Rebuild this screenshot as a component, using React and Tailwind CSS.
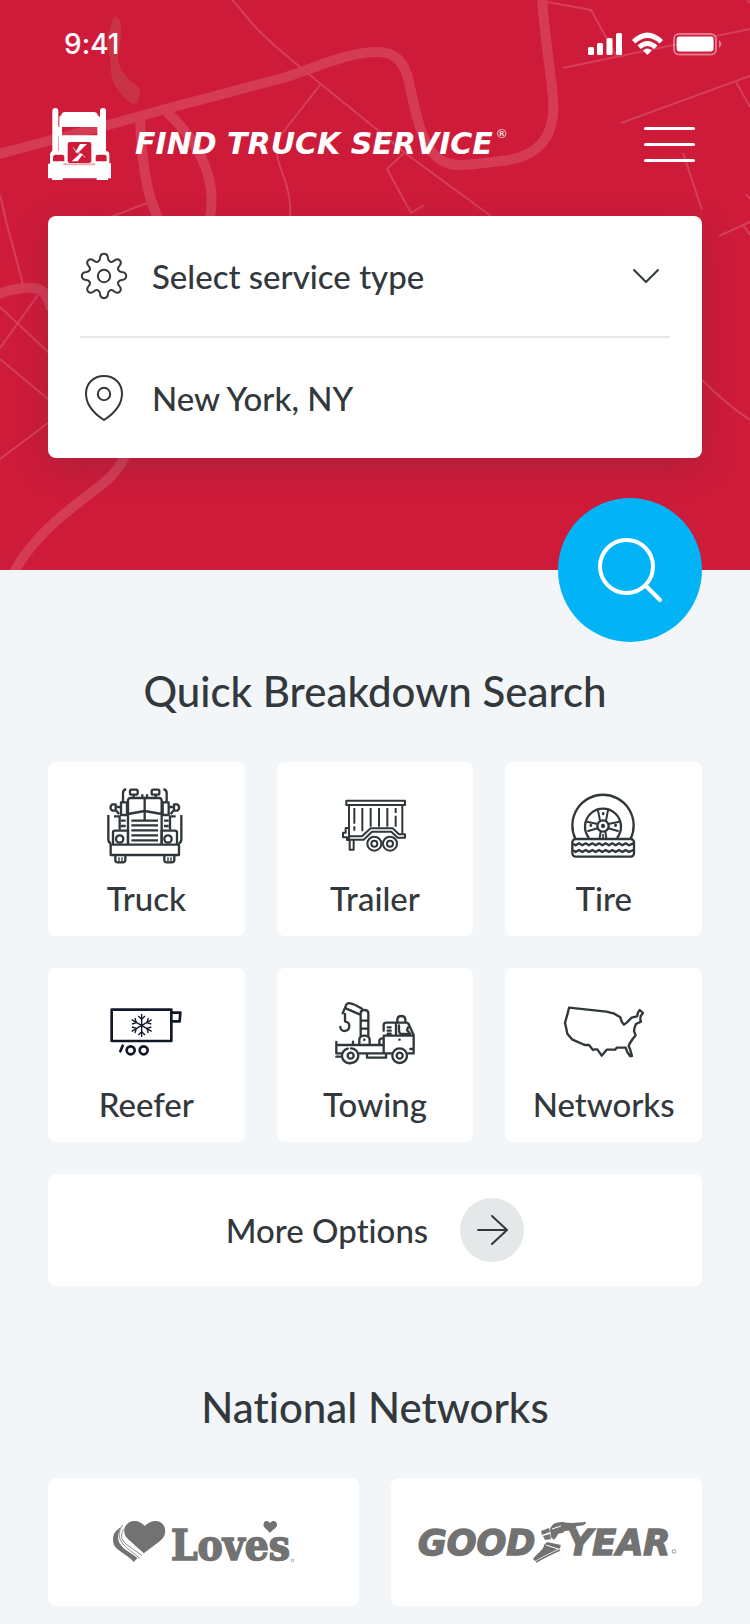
import React from 'react';

function MapBackground() {
  return (
    <svg
      className="absolute inset-0 h-full w-full"
      viewBox="0 0 750 570"
      preserveAspectRatio="xMidYMid slice"
      fill="none"
      aria-hidden="true"
    >
      <path
        d="M114 16C119 17 121 21 121 28C122 38 118 50 118 58C119 72 131 82 139 87C141 92 138 104 134 104C128 104 113 86 112 78C110 68 112 62 107 46C106 36 111 26 114 16Z"
        fill="#c83446"
      />
      <g stroke="#d53b55" strokeWidth="10">
        <path d="M-5 155C60 138 105 126 162 110L283 78C310 70 345 52 378 52C395 52 405 62 409 82C413 100 415 115 422 133C431 155 440 165 460 165C475 165 490 162 502 161C540 157 556 135 553 97C549 60 544 30 542 -2" />
        <path d="M140 115C141 150 144 192 160 222C172 242 202 245 210 217C217 180 200 143 167 112" />
        <path d="M-4 295C14 287 32 287 38 289C46 291 49 300 51 310" />
        <path d="M127 450C121 470 106 482 92 492C62 515 32 538 13 574" />
      </g>
      <g stroke="#d63f58" strokeWidth="2">
        <path d="M232 0C240 8 244 14 250 21C262 35 278 49 300 67L375 128L405 153L495 219" />
        <path d="M320 85L284 131C276 141 276 148 278 160C282 176 292 190 290 218" />
        <path d="M108 218L147 203M0 195L6 220M3 210L23 284M0 307L49 353M38 295L0 348M0 359L48 399M48 423L0 459" />
        <path d="M547 2L591 10L617 57M563 68L750 29M621 123L750 76M736 82L750 107M683 153L702 210" />
        <path d="M404 153L387 169L411 213L424 205M746 194L750 199M747 0L750 3M719 236L750 222M743 225L750 235M702 380Q725 403 750 420" />
      </g>
    </svg>
  );
}

function StatusBar() {
  return (
    <div className="flex h-[88px] items-center justify-between pr-7 pl-16">
      <span className="font-['Inter','Liberation_Sans',sans-serif] text-[28px] leading-8 font-medium">9:41</span>
      <svg width="134" height="24" viewBox="588 32 134 24" fill="#fff" aria-hidden="true">
        <rect x="588" y="47" width="6" height="8" rx="1.500" />
        <rect x="597" y="43" width="6" height="12" rx="1.500" />
        <rect x="606.500" y="38" width="6" height="17" rx="1.500" />
        <rect x="616" y="33" width="6" height="22" rx="1.500" />
        <path d="M632 40Q647.300 25 663 40L659.600 43.500Q647.300 32.500 635.400 43.500Z" />
        <path d="M637.500 45.500Q647.300 36.500 657.500 45.500L654 49Q647.300 43 640.900 49Z" />
        <path d="M643 50.500Q647.300 46.500 651.800 50.500L647.400 55Z" />
        <rect x="674" y="34" width="42" height="20.500" rx="5" fill="none" stroke="#fff" strokeOpacity=".4" strokeWidth="2" />
        <rect x="676.600" y="36.600" width="37" height="15" rx="3" />
        <path d="M719 40Q724 44 719 48Z" fillOpacity=".4" />
      </svg>
    </div>
  );
}

function BrandTruck() {
  return (
    <svg width="63" height="72" viewBox="144 324 189 216" fill="#fff" aria-hidden="true">
      <path d="M157 333Q157 324 166 324Q175 324 175 333V455H157ZM300 333Q300 324 309 324Q318 324 318 333V455H300Z" />
      <path d="M178 381V353Q179 347 184 346Q185 336 196 336H280Q292 336 293 346Q300 348 300 355V381Z" />
      <path d="M174 380H186V406H292V380H302V409H174Z" />
      <path
        fillRule="evenodd"
        d="M176 408H300V452H317Q328 453 328 464V490H333V535H324V540H290V535H188V540H156V535H144V491H150V464Q151 453 160 452H176ZM210 426Q203 426 203 433V482Q203 489 210 489H267Q274 489 274 482V433Q274 426 267 426ZM166 464Q159 465 159 472V484H193V470Q192 464 187 464ZM292 464Q287 465 287 470V484H320V471Q320 464 313 464Z"
      />
      <path d="M190 490H286V496H190Z" fill="#f3a6b4" />
      <path d="M240 432H261L236 457H226ZM233 484H215L239 462H249Z" />
      <path d="M228 457L246 462M219 442L230 457M246 462L255 473" stroke="#fff" strokeWidth="2" fill="none" />
    </svg>
  );
}

function GearIcon() {
  return (
    <svg className="shrink-0" width="48" height="48" viewBox="240 126 144 144" fill="none" stroke="#32383b" strokeWidth="6" strokeLinejoin="round" aria-hidden="true">
      <circle cx="312" cy="198" r="18.500" />
      <path d="M300 145C301 127 323 127 324 145C325 155 333 159 341 153C355 140 370 155 357 169C351 177 355 185 365 186C383 187 383 209 365 210C355 211 351 219 357 227C370 241 355 256 341 243C333 237 325 241 324 251C323 269 301 269 300 251C299 241 291 237 283 243C269 256 254 241 267 227C273 219 269 211 259 210C241 209 241 187 259 186C269 185 273 177 267 169C254 155 269 140 283 153C291 159 299 155 300 145Z" />
    </svg>
  );
}

function PinIcon() {
  return (
    <svg className="shrink-0" width="48" height="48" viewBox="240 492 144 144" fill="none" stroke="#32383b" strokeWidth="6" strokeLinejoin="round" aria-hidden="true">
      <circle cx="312" cy="552" r="18.500" />
      <path d="M312 630C283 611 258 583 258 551C258 520 280 498 312 498C344 498 366 520 366 551C366 583 341 611 312 630Z" />
    </svg>
  );
}

function TruckIcon() {
  return (
    <svg width="112" height="112" viewBox="-29 -39 336 336" fill="none" stroke="#30373a" strokeWidth="7" strokeLinejoin="round" aria-hidden="true">
      <path d="M85 207V76Q86 69 93 69H178Q185 69 186 76V207M85 117L135 108L186 117M135 69V136M128 58V69M142 58V69" />
      <rect x="91" y="44" width="23" height="15" rx="4" />
      <rect x="156" y="44" width="23" height="15" rx="4" />
      <path d="M102 59V69M168 59V69M80 43Q70 43 70 54V82M191 43Q201 43 201 54V82" />
      <path d="M64 82H82V120H64ZM189 82H207V120H189ZM62 96H50M209 96H222M58 117L50 107M213 117L221 107" />
      <path d="M38 88H48V107H38L33 101V94ZM233 88H223V107H233L238 101V94Z" />
      <path d="M26 120V193Q26 203 34 206M245 120V193Q245 203 237 206M43 124H60V164M228 124H211V164" />
      <path d="M64 137H78M64 153H78M193 137H207M193 153H207M95 137H175M95 151H175M95 166H175M95 181H175M95 196H175" />
      <path d="M40 207V172Q40 167 46 167H85V207M232 207V172Q232 167 225 167H186V207" />
      <circle cx="60" cy="192" r="11" />
      <circle cx="205" cy="192" r="11" />
      <path d="M33 209H238V240H33ZM47 241V256Q48 262 54 262H70Q76 262 77 256V241M194 241V256Q195 262 201 262H217Q223 262 224 256V241" />
      <path d="M58 247V260M67 247V260M205 247V260M214 247V260" strokeWidth="4" />
    </svg>
  );
}

function TrailerIcon() {
  return (
    <svg width="112" height="112" viewBox="-33 -69 336 336" fill="none" stroke="#30373a" strokeWidth="6" strokeLinejoin="round" aria-hidden="true">
      <rect x="49" y="47" width="176" height="13" />
      <path d="M57 60V154M217 60V146M73 69V116M73 124V137M97 69V139M122 69V125M147 69V125M172 69V125M197 69V84M197 92V125" />
      <path d="M57 154H96L122 130H188L207 148H225V158H203L184 140H126L101 164H57ZM57 129H47V143H39V157H51V165H57M59 166V194H71V166" />
      <circle cx="133" cy="176" r="21" />
      <circle cx="133" cy="176" r="9" />
      <circle cx="180" cy="176" r="21" />
      <circle cx="180" cy="176" r="9" />
    </svg>
  );
}

function TireIcon() {
  return (
    <svg width="112" height="112" viewBox="-37 -54 336 336" fill="none" stroke="#30373a" strokeWidth="7" strokeLinejoin="round" aria-hidden="true">
      <path d="M45 176A92 92 0 1 1 211 176M86 174A54 54 0 1 1 170 174" />
      <circle cx="128" cy="138" r="17" />
      <circle cx="128" cy="138" r="3" fill="#30373a" />
      <path d="M119 122L112 86M137 122L144 86M112 132L79 125M112 145L81 154M144 132L177 125M144 145L175 154M121 155L118 174M135 155L138 174" strokeWidth="6" />
      <path d="M126 98H131V104H126ZM89 133H94V139H89ZM163 133H168V139H163Z" fill="#30373a" strokeWidth="3" />
      <path d="M128 162V174" strokeWidth="5" />
      <rect x="36" y="177" width="185" height="53" rx="10" />
      <path d="M38 191L46 196L56 190L66 196L76 190L86 196L96 190L106 196L116 190L126 196L136 190L146 196L156 190L166 196L176 190L186 196L196 190L206 196L219 190M38 211L46 216L56 210L66 216L76 210L86 216L96 210L106 216L116 210L126 216L136 210L146 216L156 210L166 216L176 210L186 216L196 210L206 216L219 210" />
    </svg>
  );
}

function ReeferIcon() {
  return (
    <svg width="112" height="112" viewBox="-29 -81 336 336" fill="none" stroke="#101828" strokeWidth="8" strokeLinejoin="round" aria-hidden="true">
      <path d="M36 44H215V138H36ZM215 53H242L240 79H215" />
      <circle cx="93" cy="166" r="12" />
      <circle cx="132" cy="166" r="12" />
      <path d="M69 152L62 169" strokeLinecap="round" />
      <g strokeWidth="4">
        <path d="M126 57V126M96 74L156 109M156 74L96 109" />
        <path d="M116 63L126 73L136 63M116 120L126 110L136 120M97 87L110 83L106 69M155 87L142 83L146 69M97 96L110 100L106 114M155 96L142 100L146 114" />
      </g>
    </svg>
  );
}

function TowingIcon() {
  return (
    <svg width="112" height="112" viewBox="-18 -66 336 336" fill="none" stroke="#30373a" strokeWidth="7" strokeLinecap="round" strokeLinejoin="round" aria-hidden="true">
      <path d="M53 70L64 44Q68 38 76 40L86 43M92 46L111 56M64 56L104 73M60 72V92M60 94Q72 96 73 107C73 127 46 128 46 111" />
      <path d="M107 136V70Q107 60 118 60Q130 60 130 70V136M107 92H130M107 116H130M103 162V149Q104 137 118 137Q133 137 134 149V162M118 148V150" />
      <path d="M51 190H34V165H176M34 156V165M84 155V165M163 163V152Q164 145 174 145M34 200H46M102 190H199M126 194V203H183V194" />
      <path d="M176 188V140M176 122V104Q177 98 184 98H245Q251 99 253 107L266 135V190H249M176 137H266M213 100V132M188 112H197M188 122H197M188 131H197M223 149H224M256 177H266" />
      <path d="M217 96V87Q219 78 229 78Q239 78 241 87V96M222 106V119Q222 132 231 132H256L246 120L249 112" />
      <path d="M68 176A22 22 0 1 0 78 219M78 175A22 22 0 0 1 78 219" />
      <circle cx="77" cy="197" r="9" />
      <circle cx="224" cy="197" r="22" />
      <circle cx="224" cy="197" r="9" />
    </svg>
  );
}

function NetworksIcon() {
  return (
    <svg width="112" height="112" viewBox="-7 -81 336 336" fill="none" stroke="#30373a" strokeWidth="7" strokeLinejoin="round" aria-hidden="true">
      <path d="M56 38L105 43L168 50L192 56L210 67L215 82L221 89L230 82L244 68L260 64L263 53L268 45L278 54L271 63L270 74L272 80L257 87L253 97L251 108L256 121L247 132L239 144L235 153L240 165L245 183H239L231 171L226 158H199L195 164H169L154 182L141 163H134L128 165L116 150H103L65 133L51 116L48 101L44 83L51 59Z" />
    </svg>
  );
}

function LovesLogo() {
  return (
    <svg width="184" height="76" viewBox="0 -16 184 76" fill="#727272" role="img" aria-label="Love's">
      <path d="M32.700 6C36 2.500 40 1 43.500 1C49 1 53.200 5 53.200 11C53.200 16 51 18 48 21L31.800 33.300L17 20C14 17 12.200 15 12.200 11C12.200 5 17 1 22.500 1C27 1 30 3 32.700 6Z" />
      <path d="M9 7C3 11 1 14 1 20C1 26 5 29 8 31C13 35 18 37 21.600 42L25.500 38C18 32 12 30 8 24C5 19 6 12 9 7Z" />
      <path d="M11 5C6 11 6 18 11 24C15 29 22 33 27.500 38M12 9C8 14 9 20 14 24L30 35.500" fill="none" stroke="#727272" strokeWidth=".8" />
      <text x="59" y="40" fontSize="42" fontWeight="700" stroke="#727272" strokeWidth="1.500" className="font-['DejaVu_Serif_Condensed','DejaVu_Serif',serif]">Loves</text>
      <path d="M158 3C161 -.5 165 1 165 5C165 8 161 9 158 13C155 9 151.500 8 151.500 5C151.500 1 155 -.5 158 3Z" />
      <circle cx="180.500" cy="40.500" r="1.300" fill="none" stroke="#727272" strokeWidth=".6" />
    </svg>
  );
}

function GoodyearLogo() {
  return (
    <svg width="264" height="76" viewBox="0 -16 264 76" fill="#727272" role="img" aria-label="Goodyear">
      <g fontSize="35" fontWeight="900" fontStyle="italic" stroke="#727272" strokeWidth="1.500" className="font-['DejaVu_Sans',sans-serif]">
        <text x="3" y="35">GOOD</text>
        <text x="152" y="35">YEAR</text>
      </g>
      <path d="M136 7C138 3 143 2 148 2C157 4 163 2 171 2C171 5 167 6 161 6C163 8 159 9 155 9C156 11 152 11 149 11C150 13 146 13 143 14C142 17 140 18 139 20L136 17L135 9Z" />
      <path d="M126 11L134 8L135 12L127 15ZM128 16L135 14L136 19L130 20ZM132 22L146 25L145 28L127 37L120 41L118 39C121 34 129 30 129 25Z" />
      <path d="M137 9L146 6M131 25L143 29" stroke="#fff" strokeWidth="1" />
      <path d="M145 30C138 33 130 37 121 42" fill="none" stroke="#727272" strokeWidth="1.500" />
      <circle cx="259" cy="31.500" r="1.800" fill="none" stroke="#727272" strokeWidth=".7" />
    </svg>
  );
}

const services = [
  { label: 'Truck', Icon: TruckIcon },
  { label: 'Trailer', Icon: TrailerIcon },
  { label: 'Tire', Icon: TireIcon },
  { label: 'Reefer', Icon: ReeferIcon },
  { label: 'Towing', Icon: TowingIcon },
  { label: 'Networks', Icon: NetworksIcon },
];

export default function App() {
  return (
    <div className="min-h-screen bg-[#f2f6f9] font-['Lato','Liberation_Sans',sans-serif] font-medium text-[#32383b] [font-variant-ligatures:none]">
      <header className="relative bg-[#ce1b3a] pb-28 text-white">
        <MapBackground />
        <div className="relative">
          <StatusBar />
          <div className="mt-5 flex items-center justify-between px-12">
            <a href="#home" className="flex items-center gap-6">
              <BrandTruck />
              <span className="flex gap-1">
                <span className="font-['DejaVu_Sans','Liberation_Sans',sans-serif] text-[30px] leading-10 font-bold whitespace-nowrap italic">FIND TRUCK SERVICE</span>
                <span className="text-[12px] leading-5 font-normal">®</span>
              </span>
            </a>
            <button type="button" aria-label="Menu" className="flex w-[58px] flex-col gap-[13px] pr-[7px]">
              <span className="h-[3px] rounded-full bg-white" />
              <span className="h-[3px] rounded-full bg-white" />
              <span className="h-[3px] rounded-full bg-white" />
            </button>
          </div>
          <form className="mx-12 mt-9 rounded-lg bg-white px-8 text-[33px] text-[#32383b] shadow-[0_10px_32px_rgba(50,56,59,0.2)]">
            <label className="relative flex h-[120px] items-center gap-6">
              <GearIcon />
              <select aria-label="Service type" defaultValue="" className="min-w-0 flex-1 appearance-none bg-transparent leading-[48px] outline-none">
                <option value="">Select service type</option>
                <option value="truck">Truck</option>
                <option value="trailer">Trailer</option>
                <option value="tire">Tire</option>
              </select>
              <svg className="pointer-events-none absolute right-2.5" width="28" height="16" viewBox="0 0 28 16" fill="none" stroke="#32383b" strokeWidth="2" strokeLinecap="round" strokeLinejoin="round" aria-hidden="true">
                <path d="M2 2L14 14L26 2" />
              </svg>
            </label>
            <div className="h-0.5 bg-[#e4e8e8]" />
            <label className="flex h-[120px] items-center gap-6">
              <PinIcon />
              <input aria-label="Location" type="text" defaultValue="New York, NY" className="min-w-0 flex-1 bg-transparent leading-[48px] outline-none" />
            </label>
          </form>
        </div>
        <button type="button" aria-label="Search" className="absolute right-12 -bottom-[72px] flex size-36 items-center justify-center rounded-full bg-[#02b4f6]">
          <svg width="72" height="72" viewBox="0 0 72 72" fill="none" stroke="#fff" strokeWidth="4" strokeLinecap="round" aria-hidden="true">
            <circle cx="32.500" cy="32.500" r="26.500" />
            <path d="M52 52L66 66" />
          </svg>
        </button>
      </header>

      <main className="px-12 pt-[93px] pb-[18px]">
        <section>
          <h2 className="text-center text-[42px] leading-[56px] font-medium">Quick Breakdown Search</h2>
          <div className="mt-[43px] grid grid-cols-3 gap-8">
            {services.map(({ label, Icon }) => (
              <button key={label} type="button" className="flex flex-col items-center rounded-lg bg-white pb-3.5">
                <Icon />
                <span className="text-[33px] leading-[48px]">{label}</span>
              </button>
            ))}
          </div>
          <button type="button" className="mt-8 flex h-28 w-full items-center justify-center gap-8 rounded-lg bg-white">
            <span className="text-[33px] leading-[48px]">More Options</span>
            <span className="flex size-16 items-center justify-center rounded-full bg-[#e4e8e8]">
              <svg width="32" height="32" viewBox="0 0 32 32" fill="none" stroke="#32383b" strokeWidth="2" strokeLinecap="round" strokeLinejoin="round" aria-hidden="true">
                <path d="M2 16H31M16 2L31 16L16 30" />
              </svg>
            </span>
          </button>
        </section>
        <section className="mt-[93px]">
          <h2 className="text-center text-[42px] leading-[56px] font-medium">National Networks</h2>
          <div className="mt-[43px] grid grid-cols-2 gap-8">
            <a href="#loves" className="flex h-32 items-center justify-center rounded-lg bg-white">
              <LovesLogo />
            </a>
            <a href="#goodyear" className="flex h-32 items-center justify-center rounded-lg bg-white">
              <GoodyearLogo />
            </a>
          </div>
        </section>
      </main>
    </div>
  );
}
